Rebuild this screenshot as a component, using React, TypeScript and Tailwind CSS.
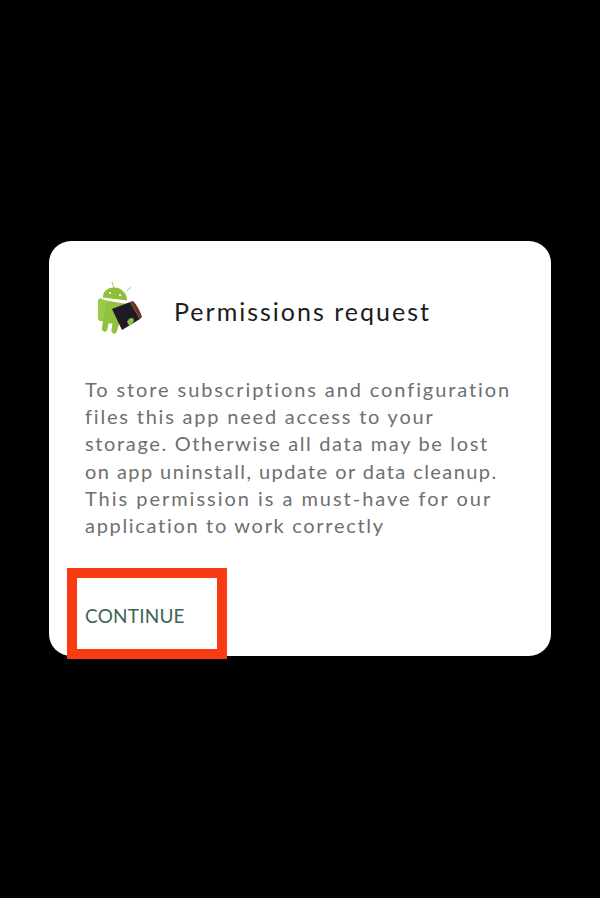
export default function App() {
  return (
    <div className="w-[600px] h-[898px] bg-black flex flex-col pt-[241px] px-[49px] font-['Lato',sans-serif]">
      <div className="relative w-[502px] h-[415px] bg-white rounded-[22px] flex flex-col pl-[36px]">
        <div className="flex items-center h-[54px] mt-[41px] pl-[11px]">
          <svg viewBox="96 282 48 54" className="w-[48px] h-[54px] shrink-0">
            <g stroke="#a9c860" strokeWidth="1" fill="none">
              <path d="M112 282l2 6" />
              <path d="M131 287l-4 4" />
            </g>
            <path d="M103 296c1-6 6-9 12-8.500s11 5 12 11l0 2-24-3z" fill="#8fbe3b" />
            <circle cx="110" cy="293" r="1.100" fill="#fff" />
            <circle cx="120" cy="295" r="1.100" fill="#fff" />
            <path d="M103 300l24 4-3 17c-.5 2-2 3-4 3h-1l-2 7c-.6 2-2 3-3.500 2.500s-2.500-2-2-4l1-6h-4l-1 5.500c-.4 2-1.800 3-3.500 2.500s-2.500-2-2-4l1-6c-2-.6-3-2-2.700-4z" fill="#92c03f" />
            <path d="M98 300c1-2 4-2 6 0l2.500 2-3 17c-.4 1.800-2 2.500-3.500 2s-2.500-2-2.200-4z" fill="#9cc84c" />
            <path d="M112 309l18-7 10 17-18 11z" fill="#1f1a24" />
            <path d="M130 302l3-1c4 4 7 10 9 16l-2 2z" fill="#6e3324" />
            <path d="M127 322c1-3 4-5 6-3.500 1.500 1 1 3-.5 4.500l-3 3z" fill="#92c03f" />
          </svg>
          <h1 className="ml-[30px] mt-[4px] text-[25px] leading-[30px] tracking-[2px] text-[#1c1c1c] font-normal">
            Permissions request
          </h1>
        </div>
        <div className="mt-[40px] text-[20px] leading-[27.2px] text-[#6f6f6f] whitespace-nowrap">
          <p className="tracking-[1.9px]">To store subscriptions and configuration</p>
          <p className="tracking-[1.8px]">files this app need access to your</p>
          <p className="tracking-[1.65px]">storage. Otherwise all data may be lost</p>
          <p className="tracking-[1.43px]">on app uninstall, update or data cleanup.</p>
          <p className="tracking-[1.97px]">This permission is a must-have for our</p>
          <p className="tracking-[1.69px]">application to work correctly</p>
        </div>
        <div className="mt-[65px] text-[19px] leading-[24px] tracking-[0.2px] text-[#3b6658]">CONTINUE</div>
        <div className="absolute left-[18px] top-[327px] w-[160px] h-[91px] border-[10px] border-[#f73c14]" />
      </div>
    </div>
  );
}
